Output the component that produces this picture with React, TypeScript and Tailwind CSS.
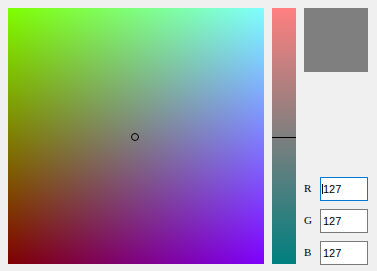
import React from 'react';

const channels = [
  { label: 'R', value: 127, focused: true },
  { label: 'G', value: 127, focused: false },
  { label: 'B', value: 127, focused: false },
];

const ColorPicker: React.FC = () => {
  return (
    <div className="w-full min-h-screen bg-[#f0f0f0] p-2 flex gap-2 font-['Liberation_Sans',sans-serif]">
      {/* 2D field: green on Y, blue on X, red fixed */}
      <div className="relative w-[256px] h-[256px] shrink-0 bg-[#7f0000] bg-[linear-gradient(to_top,#000,#0f0),linear-gradient(to_right,#000,#00f)] bg-blend-screen">
        <div className="absolute left-[123px] top-[125px] w-2 h-2 rounded-full border border-black" />
      </div>

      {/* red slider */}
      <div className="relative w-6 h-[256px] shrink-0 bg-[linear-gradient(to_bottom,#ff7f7f,#007f7f)]">
        <div className="absolute left-0 right-0 top-[129px] h-px bg-black" />
      </div>

      {/* preview + inputs */}
      <div className="w-16 h-[256px] flex flex-col justify-between">
        <div className="w-16 h-16 bg-[#7f7f7f]" />
        <div className="flex flex-col gap-2">
          {channels.map(c => (
            <div key={c.label} className="flex items-center h-6">
              <span className="w-4 text-[11px] leading-none text-black font-['Liberation_Serif',serif]">{c.label}</span>
              <div className="relative">
                <input
                  readOnly
                  value={c.value}
                  className={`w-12 h-6 bg-white border pl-[2px] text-[11px] text-black outline-none ${c.focused ? 'border-[#0078d7]' : 'border-[#7a7a7a]'}`}
                />
                {c.focused && <span className="absolute left-[2px] top-[8px] w-px h-[10px] bg-black" />}
              </div>
            </div>
          ))}
        </div>
      </div>
    </div>
  );
};

export default function App() {
  return <ColorPicker />;
}
